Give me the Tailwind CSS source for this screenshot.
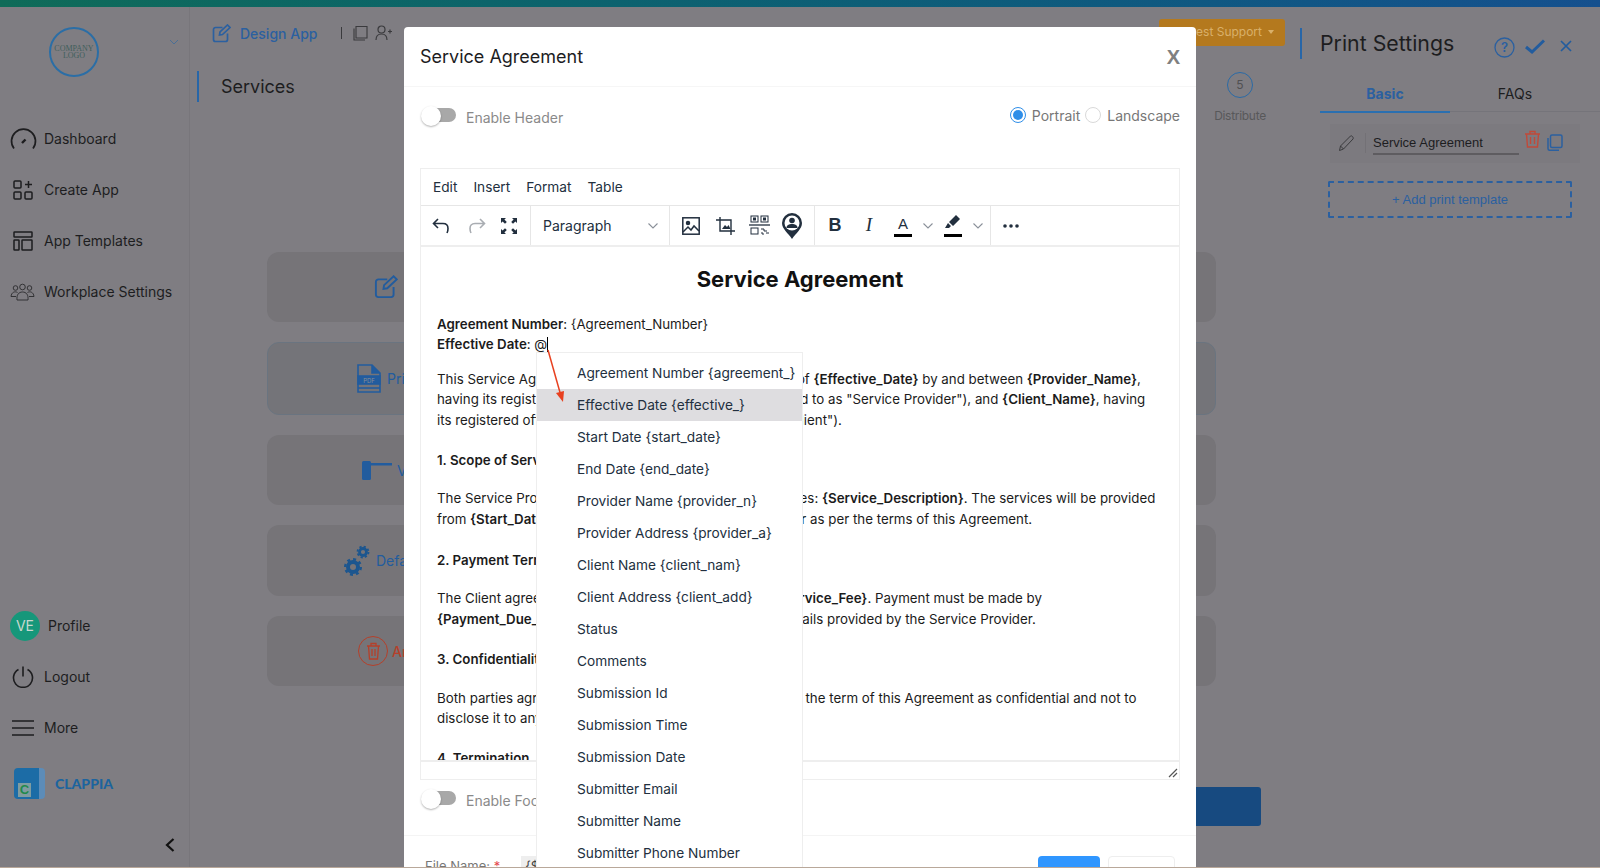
<!DOCTYPE html>
<html lang="en">
<head>
  <meta charset="UTF-8" />
  <meta name="viewport" content="width=device-width, initial-scale=1.0" />
  <title>Print Settings</title>
  <script src="https://cdn.jsdelivr.net/npm/@tailwindcss/browser@4"></script>
</head>
<body class="bg-[#b9a89a] font-[Inter,sans-serif] overflow-hidden">
  <div class="relative w-[1600px] h-[867px] bg-[#7f7d82] overflow-hidden flex flex-col">
    <div class="h-[7px] shrink-0 bg-gradient-to-r from-[#0f6b58] to-[#15508e]"></div>

    <div class="flex flex-1 min-h-0">
      <!-- sidebar -->
      <aside class="w-[190px] shrink-0 border-r border-[#78767b] flex flex-col relative text-[14px] text-[#1d1d1f]">
        <div class="h-[106px] shrink-0 relative">
          <div class="absolute left-[49px] top-[20px] w-[50px] h-[50px] rounded-full border-[2.500px] border-[#2b6ea6] flex flex-col items-center justify-center font-['Liberation_Serif',serif] text-[8px] leading-[7px] text-[#3f5f5c]">
            <span>COMPANY</span><span>LOGO</span>
          </div>
          <svg class="absolute left-[169px] top-[32px]" width="10" height="6" viewBox="0 0 10 6" fill="none" stroke="#4a6f96" stroke-width="1"><path d="M1 1l4 4 4-4"/></svg>
        </div>
        <nav class="flex flex-col">
          <a class="h-[51px] flex items-center gap-[7px] pl-[10px]">
            <svg width="27" height="24" viewBox="0 0 27 24" fill="none" stroke="#1d1d1f" stroke-width="1.700"><path d="M4 21.500A12 12 0 1 1 23 21.500"/><path d="M12 16l3.500-3.500" stroke-width="2.400"/></svg>
            <span>Dashboard</span>
          </a>
          <a class="h-[51px] flex items-center gap-[11px] pl-[13px]">
            <svg width="20" height="20" viewBox="0 0 20 20" fill="none" stroke="#1d1d1f" stroke-width="1.500"><rect x="1" y="1" width="7" height="7" rx="1"/><rect x="1" y="12" width="7" height="7" rx="1"/><rect x="12" y="12" width="7" height="7" rx="1"/><path d="M15.500 1v7M12 4.500h7"/></svg>
            <span>Create App</span>
          </a>
          <a class="h-[51px] flex items-center gap-[11px] pl-[13px]">
            <svg width="20" height="20" viewBox="0 0 20 20" fill="none" stroke="#1d1d1f" stroke-width="1.500"><rect x="1" y="1" width="18" height="5" rx="0.500"/><rect x="1" y="9" width="5" height="10" rx="0.500"/><rect x="9" y="9" width="10" height="10" rx="0.500"/></svg>
            <span>App Templates</span>
          </a>
          <a class="h-[51px] flex items-center gap-[9px] pl-[10px]">
            <svg width="25" height="18" viewBox="0 0 25 18" fill="none" stroke="#2a2a2c" stroke-width="0.900"><circle cx="12.500" cy="4" r="2.800"/><circle cx="5.500" cy="5" r="2.300"/><circle cx="19.500" cy="5" r="2.300"/><path d="M7 17c-.5-5 1.500-8 5.500-8s6 3 5.500 8z"/><path d="M7.500 9.500C5 8 1.500 9 1 13.500h5M17.500 9.500c2.500-1.500 6-.5 6.500 4h-5"/></svg>
            <span>Workplace Settings</span>
          </a>
        </nav>

        <div class="mt-auto flex flex-col">
          <a class="h-[51px] flex items-center gap-[8px] pl-[10px]">
            <span class="w-[30px] h-[30px] rounded-full bg-[#16977a] text-[#c9d8d0] flex items-center justify-center">VE</span>
            <span>Profile</span>
          </a>
          <a class="h-[51px] flex items-center gap-[10px] pl-[12px]">
            <svg width="22" height="22" viewBox="0 0 22 22" fill="none" stroke="#1d1d1f" stroke-width="1.600"><path d="M6.500 3.500a9.500 9.500 0 1 0 9 0M11 0.500v10"/></svg>
            <span>Logout</span>
          </a>
          <a class="h-[51px] flex items-center gap-[10px] pl-[12px]">
            <svg width="22" height="18" viewBox="0 0 22 18" fill="none" stroke="#1d1d1f" stroke-width="1.600"><path d="M0 2h22M0 9h22M0 16h22"/></svg>
            <span>More</span>
          </a>
          <div class="h-[41px] mt-[10px] flex items-center gap-[10px] pl-[14px]">
            <div class="w-[31px] h-[31px] rounded-[4px] bg-[#1c6ca6] border-r-[6px] border-[#5c8cb8] relative">
              <span class="absolute left-[4px] bottom-[2px] w-[13px] h-[14px] bg-[#7f9ca0] text-[#1f8a4c] text-[13px] leading-[14px] font-bold text-center font-['Liberation_Sans',sans-serif]">C</span>
            </div>
            <span class="text-[14px] font-black text-[#1c649e] font-[Lato,sans-serif]">CLAPPIA</span>
          </div>
          <div class="h-[63px] flex items-center justify-end pr-[14px] pt-[19px]">
            <svg width="10" height="14" viewBox="0 0 10 14" fill="none" stroke="#111" stroke-width="2.200"><path d="M8.500 1L2 7l6.500 6"/></svg>
          </div>
        </div>
      </aside>

      <!-- main -->
      <main class="flex-1 min-w-0 flex flex-col relative">
        <div class="h-[44px] flex items-center pl-[22px] pt-[8px]">
          <svg width="19" height="19" viewBox="0 0 19 19" fill="none" stroke="#2b60a0" stroke-width="1.700"><path d="M15.500 9.500v6a2 2 0 0 1-2 2h-10a2 2 0 0 1-2-2v-10a2 2 0 0 1 2-2h7"/><path d="M7.500 11l.5-3L15.500 1l2.500 2.500-7.500 7z"/></svg>
          <span class="ml-[9px] text-[14px] font-medium text-[#2b60a0]">Design App</span>
          <span class="ml-[24px] w-px h-[12px] bg-[#3a3a3d]"></span>
          <svg class="ml-[11px]" width="15" height="16" viewBox="0 0 15 16" fill="none" stroke="#3a3a3d" stroke-width="1.100"><path d="M3 1.500h11v11.500H3z"/><path d="M1 3.500v11.500h11"/></svg>
          <svg class="ml-[7px]" width="17" height="16" viewBox="0 0 17 16" fill="none" stroke="#3a3a3d" stroke-width="1.200"><circle cx="6.500" cy="4.500" r="3.500"/><path d="M1 15c0-4 2-6 5.500-6s5.500 2 5.500 6M13 6.500h4M15 4.500v4"/></svg>

          <div class="ml-auto mr-[15px] -mt-[2px] w-[126px] h-[27px] rounded-[3px] bg-[#b4791e] flex items-center justify-end pr-[11px] gap-[6px] text-[12px] text-[#d9b06a]">
            <span class="whitespace-nowrap">Request Support</span>
            <span class="w-0 h-0 border-x-[3px] border-x-transparent border-t-[4px] border-t-[#d9b06a]"></span>
          </div>
        </div>

        <div class="flex mt-[20px] pl-[7px]">
          <div class="w-[2px] h-[31px] bg-[#2766a8]"></div>
          <h1 class="ml-[22px] text-[18px] leading-[31px] text-[#1d1d1f]">Services</h1>
          <div class="absolute left-[1015px] top-[65px] w-[70px] flex flex-col items-center">
            <span class="w-[26px] h-[26px] rounded-full border-[1.500px] border-[#2a6aa6] flex items-center justify-center text-[12px] text-[#505052]">5</span>
            <span class="mt-[9px] text-[12px] tracking-[-0.300px] text-[#58585a]">Distribute</span>
          </div>
        </div>

        <div class="mt-[150px] ml-[77px] w-[949px] flex flex-col gap-[20px]">
          <div class="h-[70px] rounded-xl bg-[#767478] flex items-center pl-[107px] text-[14px] text-[#225c9e]">
            <svg width="24" height="24" viewBox="0 0 19 19" fill="none" stroke="#225c9e" stroke-width="1.500"><path d="M15.500 9.500v6a2 2 0 0 1-2 2h-10a2 2 0 0 1-2-2v-10a2 2 0 0 1 2-2h7"/><path d="M7.500 11l.5-3L15.500 1l2.500 2.500-7.500 7z"/></svg>
            <span class="ml-[10px]">Design App</span>
          </div>
          <div class="h-[73px] rounded-xl bg-[#747479] border border-[#6a7480] flex items-center pl-[89px] text-[14px] text-[#225c9e]">
            <svg width="24" height="29" viewBox="0 0 24 29" fill="none" stroke="#225c9e" stroke-width="1.600"><path d="M1 1h14l8 8v19H1z"/><path d="M15 1v8h8" fill="#225c9e"/><rect x="1" y="12" width="22" height="8" fill="#225c9e"/><text x="12" y="18.500" text-anchor="middle" font-size="6" fill="#8a8c94" stroke="none">PDF</text><path d="M1 24h22"/></svg>
            <span class="ml-[6px]">Print Settings</span>
          </div>
          <div class="h-[70px] rounded-xl bg-[#767478] flex items-center pl-[95px] text-[14px] text-[#225c9e]">
            <svg width="30" height="20" viewBox="0 0 30 20" fill="#225c9e"><rect x="0" y="1" width="9" height="19" rx="1.500"/><rect x="6" y="3" width="24" height="2.500"/></svg>
            <span class="ml-[5px]">View</span>
          </div>
          <div class="h-[71px] rounded-xl bg-[#767478] flex items-center pl-[77px] text-[14px] text-[#225c9e]">
            <svg width="26" height="32" viewBox="0 0 26 32" fill="none" stroke="#1c568f"><circle cx="9" cy="22" r="5" stroke-width="4"/><circle cx="9" cy="22" r="7.800" stroke-width="2.400" stroke-dasharray="3 3.100"/><circle cx="19" cy="7" r="3.500" stroke-width="2.800"/><circle cx="19" cy="7" r="5.500" stroke-width="1.800" stroke-dasharray="2.200 2.120"/></svg>
            <span class="ml-[6px]">Default Settings</span>
          </div>
          <div class="h-[70px] rounded-xl bg-[#767478] flex items-center pl-[91px] text-[14px] font-medium text-[#b5402a]">
            <span class="w-[30px] h-[30px] rounded-full border-[1.500px] border-[#b5402a] flex items-center justify-center">
              <svg width="15" height="18" viewBox="0 0 15 18" fill="none" stroke="#b5402a" stroke-width="1.300"><path d="M1 4h13M5 4V1.500h5V4M2.500 4l1 13h8l1-13M6 7v7M9 7v7"/></svg>
            </span>
            <span class="ml-[4px]">Archive</span>
          </div>
        </div>

        <div class="absolute left-[900px] top-[780px] w-[171px] h-[39px] rounded-[3px] bg-[#174a80]"></div>
      </main>

      <!-- print settings panel -->
      <section class="w-[300px] shrink-0 flex flex-col text-[#1d1d1f]">
        <div class="h-[40px] mt-[16px] flex items-center">
          <span class="w-[2px] h-[31px] bg-[#2766a8]"></span>
          <h2 class="ml-[18px] w-[133px] text-[21.300px] leading-[30px] whitespace-nowrap">Print Settings</h2>
          <svg class="ml-[41px] mt-[8px]" width="21" height="21" viewBox="0 0 21 21" fill="none" stroke="#2b60a0" stroke-width="1.300"><circle cx="10.500" cy="10.500" r="9.500"/><text x="10.500" y="15" text-anchor="middle" font-size="13" fill="#2b60a0" stroke="none" font-weight="600">?</text></svg>
          <svg class="ml-[10px] mt-[6px]" width="20" height="15" viewBox="0 0 20 15" fill="none" stroke="#225c9e" stroke-width="3"><path d="M1 8l6 5L19 1.500"/></svg>
          <svg class="ml-[15px] mt-[6px]" width="12" height="12" viewBox="0 0 12 12" fill="none" stroke="#225c9e" stroke-width="1.700"><path d="M1 1l10 10M11 1L1 11"/></svg>
        </div>
        <div class="mt-[13px] ml-[20px] h-[36px] flex border-b border-[#75747a] text-[14px]">
          <div class="w-[130px] h-[37px] border-b-2 border-[#2a6fb0] flex items-center justify-center font-bold text-[#2b60a0]">Basic</div>
          <div class="w-[130px] flex items-center justify-center">FAQs</div>
        </div>
        <div class="mt-[12px] ml-[30px] w-[250px] h-[39px] flex items-start pt-[6px] bg-[#7c7a7f]">
          <svg class="ml-[8px] mt-[4px]" width="18" height="18" viewBox="0 0 18 18" fill="none" stroke="#3a3a3d" stroke-width="1"><path d="M1.500 16.500l1-4.500L12.500 2c1-1 3.500 1.500 2.500 3L5.500 15z"/><path d="M2.500 12l3 3"/></svg>
          <span class="ml-[9px] mt-[3px] w-px h-[20px] bg-[#737176]"></span>
          <div class="ml-[7px] w-[146px] h-[25px] flex items-center border-b-2 border-[#5e5c60] font-['Liberation_Sans',sans-serif] text-[13px] pt-[2px]">Service Agreement</div>
          <svg class="ml-[6px]" width="15" height="18" viewBox="0 0 15 18" fill="none" stroke="#c04a3a" stroke-width="1.400"><path d="M0 4h15M5 4V1.500h5V4M1.500 4l1 13h10l1-13M5.500 7v7M9.500 7v7"/></svg>
          <svg class="ml-[7px] mt-[4px]" width="16" height="17" viewBox="0 0 16 17" fill="none" stroke="#2b60a0" stroke-width="1.500"><rect x="3.500" y="1" width="11.500" height="12.500" rx="1.500"/><path d="M1 4v10.500c0 1 .8 1.800 1.800 1.800H12"/></svg>
        </div>
        <div class="mt-[18px] ml-[28px] w-[244px] h-[37px] border-2 border-dashed border-[#2b60a0] rounded-[2px] flex items-center justify-center font-['Liberation_Sans',sans-serif] text-[13px] text-[#2b60a0]">+ Add print template</div>
      </section>
    </div>

    <!-- modal, over the dimmed page -->
    <div class="absolute left-[404px] top-[27px] w-[792px] h-[860px] bg-white rounded-[4px] flex flex-col">
      <div class="h-[60px] shrink-0 border-b border-[#f6f6f6] flex items-center justify-between pl-[16px] pr-[16px]">
        <h3 class="text-[18px] text-[#1d1d1f]">Service Agreement</h3>
        <span class="font-['Liberation_Sans',sans-serif] font-bold text-[20px] text-[#808080]">X</span>
      </div>

      <div class="h-[81px] shrink-0 flex justify-between pl-[17px] pr-[16px] pt-[19px]">
        <div class="flex items-start">
          <span class="relative block w-[36px] h-[20px]">
            <span class="absolute left-[9px] top-[2px] w-[26px] h-[14px] rounded-full bg-[#a8a8a8]"></span>
            <span class="absolute left-0 top-0 w-[20px] h-[20px] rounded-full bg-white shadow-[0_1px_2px_rgba(0,0,0,.3)]"></span>
          </span>
          <span class="ml-[9px] text-[14px] text-[#8a8a8a] leading-[20px] pt-[2px]">Enable Header</span>
        </div>
        <div class="flex items-center h-[20px] -mt-px text-[14px] text-[#777]">
          <span class="w-[16px] h-[16px] rounded-full border-[1.500px] border-[#2f8ee8] flex items-center justify-center"><span class="w-[10px] h-[10px] rounded-full bg-[#2f8ee8]"></span></span>
          <span class="ml-[6px]">Portrait</span>
          <span class="ml-[5px] w-[16px] h-[16px] rounded-full border border-[#d9d9d9]"></span>
          <span class="ml-[6px]">Landscape</span>
        </div>
      </div>

      <!-- editor -->
      <div class="ml-[16px] w-[760px] h-[612px] shrink-0 border border-[#eeeeee] flex flex-col text-[#222f3e]">
        <div class="h-[37px] shrink-0 flex items-center gap-[16px] pl-[12px] text-[13.700px] border-b border-[#e6e6e6]">
          <span>Edit</span><span>Insert</span><span>Format</span><span>Table</span>
        </div>
        <div class="h-[41px] shrink-0 flex items-center border-b-2 border-[#eeeeee]">
          <div class="w-[110px] h-full border-r border-[#e6e6e6] flex items-center pl-[11px]">
            <svg width="18" height="16" viewBox="0 0 18 16" fill="none" stroke="#222f3e" stroke-width="1.600"><path d="M6 1L1.500 5.500 6 10M2 5.500h9c3.500 0 5 2.500 5 5 0 2-.5 3.500-1 4.500"/></svg>
            <svg class="ml-[18px]" width="18" height="16" viewBox="0 0 18 16" fill="none" stroke="#a9adb2" stroke-width="1.600"><path d="M12 1l4.500 4.500L12 10M16 5.500H7c-3.500 0-5 2.500-5 5 0 2 .5 3.500 1 4.500"/></svg>
            <svg class="ml-[15px]" width="16" height="16" viewBox="0 0 16 16" fill="#222f3e"><path d="M0 0h5L3.400 1.600 5.800 4 4 5.800 1.600 3.400 0 5zM16 0v5l-1.600-1.600L12 5.800 10.200 4l2.400-2.400L11 0zM0 16v-5l1.600 1.600L4 10.200 5.800 12l-2.400 2.400L5 16zM16 16h-5l1.600-1.600L10.200 12l1.800-1.800 2.400 2.400L16 11z"/></svg>
          </div>
          <div class="w-[139px] h-full border-r border-[#e6e6e6] flex items-center justify-between pl-[12px] pr-[11px] text-[14px]">
            <span>Paragraph</span>
            <svg width="10" height="6" viewBox="0 0 10 6" fill="none" stroke="#8a9099" stroke-width="1.100"><path d="M.5.500L5 5 9.500.500"/></svg>
          </div>
          <div class="w-[145px] h-full border-r border-[#e6e6e6] flex items-center pl-[12px]">
            <svg width="18" height="18" viewBox="0 0 18 18" fill="none" stroke="#222f3e" stroke-width="1.500"><rect x=".8" y=".8" width="16.400" height="16.400"/><circle cx="6" cy="6" r="1.500" fill="#222f3e"/><path d="M1 15l5-5 3 3 3-4 5 5"/></svg>
            <svg class="ml-[16px]" width="19" height="18" viewBox="0 0 19 18" fill="none" stroke="#222f3e" stroke-width="1.400"><path d="M4 0v14h15M0 3h15v15"/><path d="M6 12l3-4 2 2 1.500-2 2 4z" fill="#222f3e" stroke="none"/></svg>
            <svg class="ml-[14px]" width="21" height="21" viewBox="0 0 21 21" fill="none" stroke="#222f3e" stroke-width="1"><rect x="2" y="1" width="7" height="6"/><rect x="12" y="1" width="7" height="6"/><rect x="4.500" y="3" width="2" height="2" fill="#222f3e"/><rect x="14.500" y="3" width="2" height="2" fill="#222f3e"/><path d="M0 10h21" stroke-width="1.300"/><rect x="2" y="13" width="7" height="6"/><path d="M12 14h3v2h3M12 18h2v2M17 18h3"/></svg>
            <svg class="ml-[12px]" width="20" height="26" viewBox="0 0 20 26" fill="#222f3e"><path d="M10 0a10 10 0 0 0-10 10c0 6 6 10 10 16 4-6 10-10 10-16A10 10 0 0 0 10 0z"/><circle cx="10" cy="10" r="7.500" fill="#fff"/><circle cx="10" cy="7.500" r="2.800"/><path d="M4.500 15c0-3 2.500-4 5.500-4s5.500 1 5.500 4z"/></svg>
          </div>
          <div class="w-[176px] h-full border-r border-[#e6e6e6] flex items-center pl-[13px]">
            <span class="w-[14px] text-center font-['Liberation_Sans',sans-serif] font-bold text-[18px]">B</span>
            <span class="ml-[20px] w-[14px] text-center font-['Liberation_Serif',serif] italic text-[19px]">I</span>
            <span class="ml-[18px] w-[18px] h-[22px] flex flex-col items-center justify-between">
              <span class="text-[15px] leading-[17px] font-['Liberation_Sans',sans-serif]">A</span><span class="w-[18px] h-[3px] bg-black"></span>
            </span>
            <svg class="ml-[11px]" width="10" height="6" viewBox="0 0 10 6" fill="none" stroke="#8a9099" stroke-width="1.100"><path d="M.5.500L5 5 9.500.500"/></svg>
            <span class="ml-[11px] w-[18px] h-[22px] flex flex-col items-center justify-between">
              <svg width="16" height="14" viewBox="0 0 16 14" fill="#222f3e"><path d="M11 0l4 4-7 7-4-4zM3 8l3 3-2 2H0z"/></svg><span class="w-[18px] h-[3px] bg-black"></span>
            </span>
            <svg class="ml-[11px]" width="10" height="6" viewBox="0 0 10 6" fill="none" stroke="#8a9099" stroke-width="1.100"><path d="M.5.500L5 5 9.500.500"/></svg>
          </div>
          <svg class="ml-[12px]" width="16" height="4" viewBox="0 0 16 4" fill="#222f3e"><circle cx="2" cy="2" r="1.800"/><circle cx="8" cy="2" r="1.800"/><circle cx="14" cy="2" r="1.800"/></svg>
        </div>

        <div class="flex-1 min-h-0 overflow-hidden px-[16px] text-[13.300px] leading-[20.400px] text-[#1b1b1b] whitespace-nowrap [&_strong]:font-semibold">
          <h1 class="mt-[19px] mb-[21.500px] text-center font-bold text-[22px] leading-[26px] text-[#111]">Service Agreement</h1>
          <p><strong>Agreement Number</strong>: {Agreement_Number}<br /><strong>Effective Date</strong>: @<span class="inline-block w-px h-[16px] bg-black align-middle"></span></p>
          <p class="mt-[14.500px]">This Service Agreement ("Agreement") is entered into as of <strong>{Effective_Date}</strong> by and between <strong>{Provider_Name}</strong>,<br />having its registered office {Address_} (hereinafter referred to as "Service Provider"), and <strong>{Client_Name}</strong>, having<br />its registered office {Client_} (hereinafter referred to as "Client").</p>
          <p class="mt-[20px]"><strong>1. Scope of Services</strong></p>
          <p class="mt-[18px]">The Service Provider agrees to provide the defined services: <strong>{Service_Description}</strong>. The services will be provided<br />from <strong>{Start_Date}</strong> and it shall continue until <strong>{End_Date}</strong>, or as per the terms of this Agreement.</p>
          <p class="mt-[20.500px]"><strong>2. Payment Terms</strong></p>
          <p class="mt-[18px]">The Client agrees to pay the Service Provider the fee: <strong>{Service_Fee}</strong>. Payment must be made by<br /><strong>{Payment_Due_Date}</strong>, by using the specified payment details provided by the Service Provider.</p>
          <p class="mt-[20.500px]"><strong>3. Confidentiality</strong></p>
          <p class="mt-[18px]">Both parties agree to treat all information disclosed during the term of this Agreement as confidential and not to<br />disclose it to any third party.</p>
          <p class="mt-[19.500px]"><strong>4. Termination</strong></p>
        </div>
        <div class="h-[19px] shrink-0 border-t-2 border-[#eeeeee] flex justify-end items-end pr-[1px] pb-px">
          <svg width="10" height="10" viewBox="0 0 10 10" fill="none" stroke="#555" stroke-width="1.200"><path d="M1 9l8-8M5 9l4-4"/></svg>
        </div>
      </div>

      <div class="h-[56px] shrink-0 border-b border-[#f4f4f4] flex items-start pl-[17px] pt-[9px]">
        <span class="relative block w-[36px] h-[20px]">
          <span class="absolute left-[9px] top-[2px] w-[26px] h-[14px] rounded-full bg-[#a8a8a8]"></span>
          <span class="absolute left-0 top-0 w-[20px] h-[20px] rounded-full bg-white shadow-[0_1px_2px_rgba(0,0,0,.3)]"></span>
        </span>
        <span class="ml-[9px] text-[14px] text-[#8a8a8a] leading-[20px] pt-[2px]">Enable Footer</span>
      </div>

      <div class="flex items-start pl-[21px] pt-[20px] text-[13px]">
        <span class="text-[#777] pt-[1px]">File Name: <span class="text-[#e5484d]">*</span></span>
        <span class="ml-[21px] bg-[#eeeeee] px-[4px] pt-[1px] text-[#444]">{$</span>
        <span class="ml-auto w-[62px] h-[30px] rounded-[4px] bg-[#2f96ff]"></span>
        <span class="ml-[8px] mr-[21px] w-[67px] h-[30px] rounded-[4px] border border-[#eeeeee]"></span>
      </div>

      <!-- mention menu -->
      <ul class="absolute left-[132px] top-[325px] w-[267px] h-[540px] bg-white border border-[#eeeeee] pt-[4px] text-[13.700px] text-[#222f3e] flex flex-col">
        <li class="h-[32px] shrink-0 flex items-center pl-[40px]">Agreement Number {agreement_}</li>
        <li class="h-[32px] shrink-0 flex items-center pl-[40px] bg-[#dedde0]">Effective Date {effective_}</li>
        <li class="h-[32px] shrink-0 flex items-center pl-[40px]">Start Date {start_date}</li>
        <li class="h-[32px] shrink-0 flex items-center pl-[40px]">End Date {end_date}</li>
        <li class="h-[32px] shrink-0 flex items-center pl-[40px]">Provider Name {provider_n}</li>
        <li class="h-[32px] shrink-0 flex items-center pl-[40px]">Provider Address {provider_a}</li>
        <li class="h-[32px] shrink-0 flex items-center pl-[40px]">Client Name {client_nam}</li>
        <li class="h-[32px] shrink-0 flex items-center pl-[40px]">Client Address {client_add}</li>
        <li class="h-[32px] shrink-0 flex items-center pl-[40px]">Status</li>
        <li class="h-[32px] shrink-0 flex items-center pl-[40px]">Comments</li>
        <li class="h-[32px] shrink-0 flex items-center pl-[40px]">Submission Id</li>
        <li class="h-[32px] shrink-0 flex items-center pl-[40px]">Submission Time</li>
        <li class="h-[32px] shrink-0 flex items-center pl-[40px]">Submission Date</li>
        <li class="h-[32px] shrink-0 flex items-center pl-[40px]">Submitter Email</li>
        <li class="h-[32px] shrink-0 flex items-center pl-[40px]">Submitter Name</li>
        <li class="h-[32px] shrink-0 flex items-center pl-[40px]">Submitter Phone Number</li>
      </ul>

      <!-- red annotation arrow -->
      <svg class="absolute left-[140px] top-[320px]" width="30" height="60" viewBox="0 0 30 60" fill="none">
        <path d="M4 3l13 46" stroke="#e8401f" stroke-width="1.500"/>
        <path d="M12 46l8-2-1 11z" fill="#e8401f"/>
      </svg>
    </div>
  </div>
</body>
</html>
